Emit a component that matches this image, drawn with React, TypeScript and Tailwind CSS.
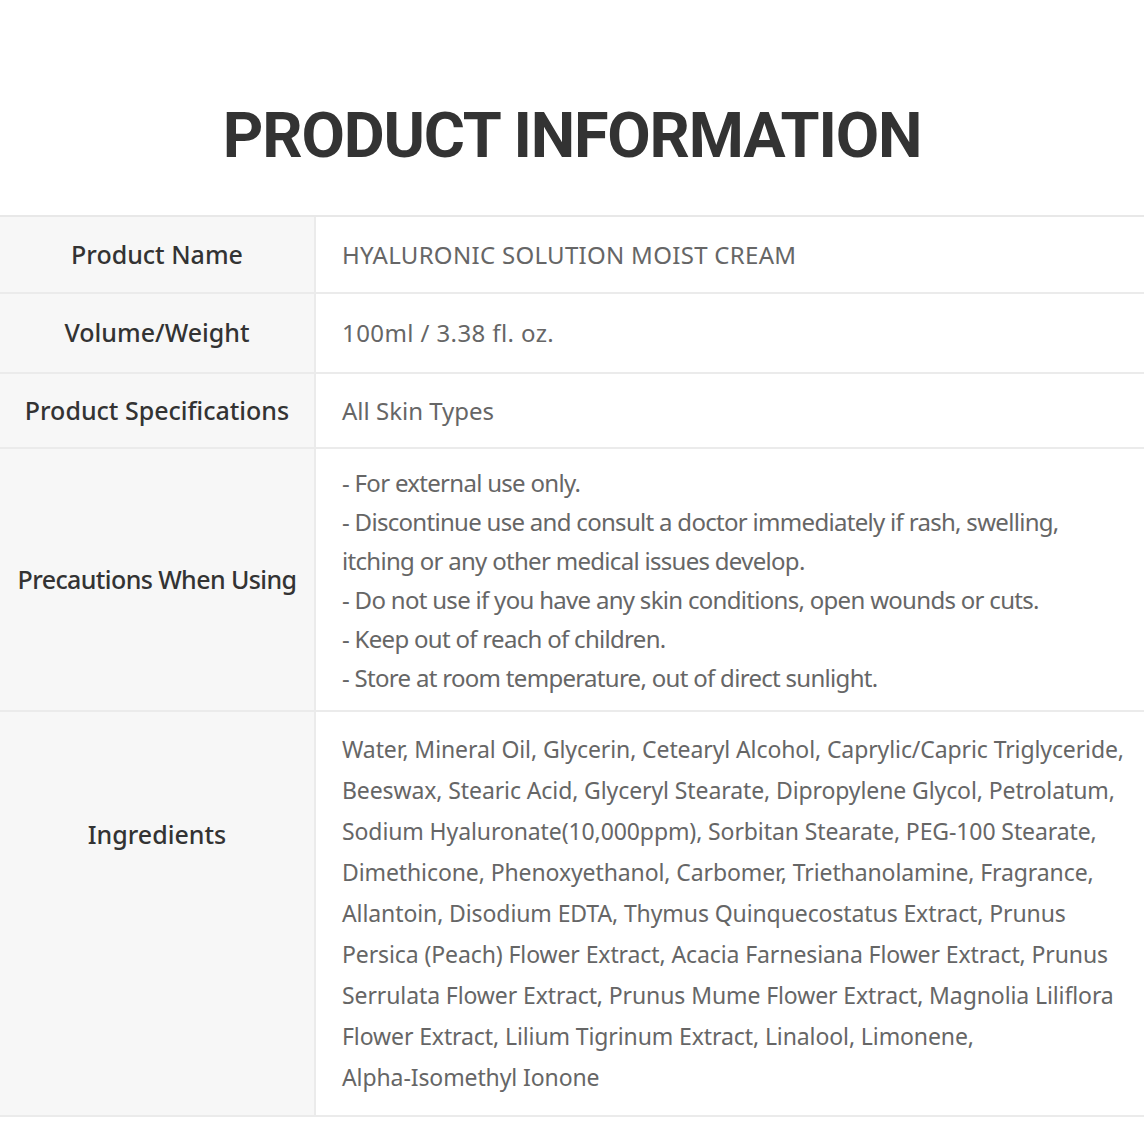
import React from 'react';

const precautions = [
  '- For external use only.',
  '- Discontinue use and consult a doctor immediately if rash, swelling,',
  'itching or any other medical issues develop.',
  '- Do not use if you have any skin conditions, open wounds or cuts.',
  '- Keep out of reach of children.',
  '- Store at room temperature, out of direct sunlight.',
];

const ingredients = [
  'Water, Mineral Oil, Glycerin, Cetearyl Alcohol, Caprylic/Capric Triglyceride,',
  'Beeswax, Stearic Acid, Glyceryl Stearate, Dipropylene Glycol, Petrolatum,',
  'Sodium Hyaluronate(10,000ppm), Sorbitan Stearate, PEG-100 Stearate,',
  'Dimethicone, Phenoxyethanol, Carbomer, Triethanolamine, Fragrance,',
  'Allantoin, Disodium EDTA, Thymus Quinquecostatus Extract, Prunus',
  'Persica (Peach) Flower Extract, Acacia Farnesiana Flower Extract, Prunus',
  'Serrulata Flower Extract, Prunus Mume Flower Extract, Magnolia Liliflora',
  'Flower Extract, Lilium Tigrinum Extract, Linalool, Limonene,',
  'Alpha-Isomethyl Ionone',
];

function Label({ children, className = '' }: { children: React.ReactNode; className?: string }) {
  return (
    <div
      className={`w-[316px] shrink-0 bg-[#f7f7f7] border-r-2 border-[#ebebeb] flex justify-center text-[25px] font-medium text-[#333333] ${className}`}
    >
      {children}
    </div>
  );
}

export default function App() {
  return (
    <div className="w-[1144px] h-[1144px] bg-white overflow-hidden font-['Noto_Sans',sans-serif]">
      <h1 className="pt-[96px] h-[215px] text-center font-['Roboto',sans-serif] font-bold text-[63px] leading-[80px] text-[#333333] tracking-[-1.2px]">
        PRODUCT INFORMATION
      </h1>

      <div className="border-t-2 border-[#e8e8e8]">
        <div className="flex h-[77px] border-b-2 border-[#ebebeb]">
          <Label className="items-center">Product Name</Label>
          <div className="flex items-center pl-[26px] text-[24px] text-[#666666] tracking-[0.3px]">
            HYALURONIC SOLUTION MOIST CREAM
          </div>
        </div>

        <div className="flex h-[80px] border-b-2 border-[#ebebeb]">
          <Label className="items-center">Volume/Weight</Label>
          <div className="flex items-center pl-[26px] text-[24px] text-[#666666] tracking-[0.4px]">
            100ml / 3.38 fl. oz.
          </div>
        </div>

        <div className="flex h-[75px] border-b-2 border-[#ebebeb]">
          <Label className="items-center">Product Specifications</Label>
          <div className="flex items-center pl-[26px] text-[24px] text-[#666666]">All Skin Types</div>
        </div>

        <div className="flex h-[263px] border-b-2 border-[#ebebeb]">
          <Label className="items-center tracking-[-0.6px]">Precautions When Using</Label>
          <div className="flex flex-col justify-center pl-[26px] text-[24px] leading-[39px] text-[#666666] tracking-[-0.7px]">
            {precautions.map((line) => (
              <div key={line} className="whitespace-nowrap">
                {line}
              </div>
            ))}
          </div>
        </div>

        <div className="flex h-[405px] border-b-2 border-[#ebebeb]">
          <Label className="items-start pt-[104px]">Ingredients</Label>
          <div className="flex flex-col justify-center pl-[26px] text-[23px] leading-[41px] text-[#666666] tracking-[-0.1px]">
            {ingredients.map((line) => (
              <div key={line} className="whitespace-nowrap">
                {line}
              </div>
            ))}
          </div>
        </div>
      </div>
    </div>
  );
}
